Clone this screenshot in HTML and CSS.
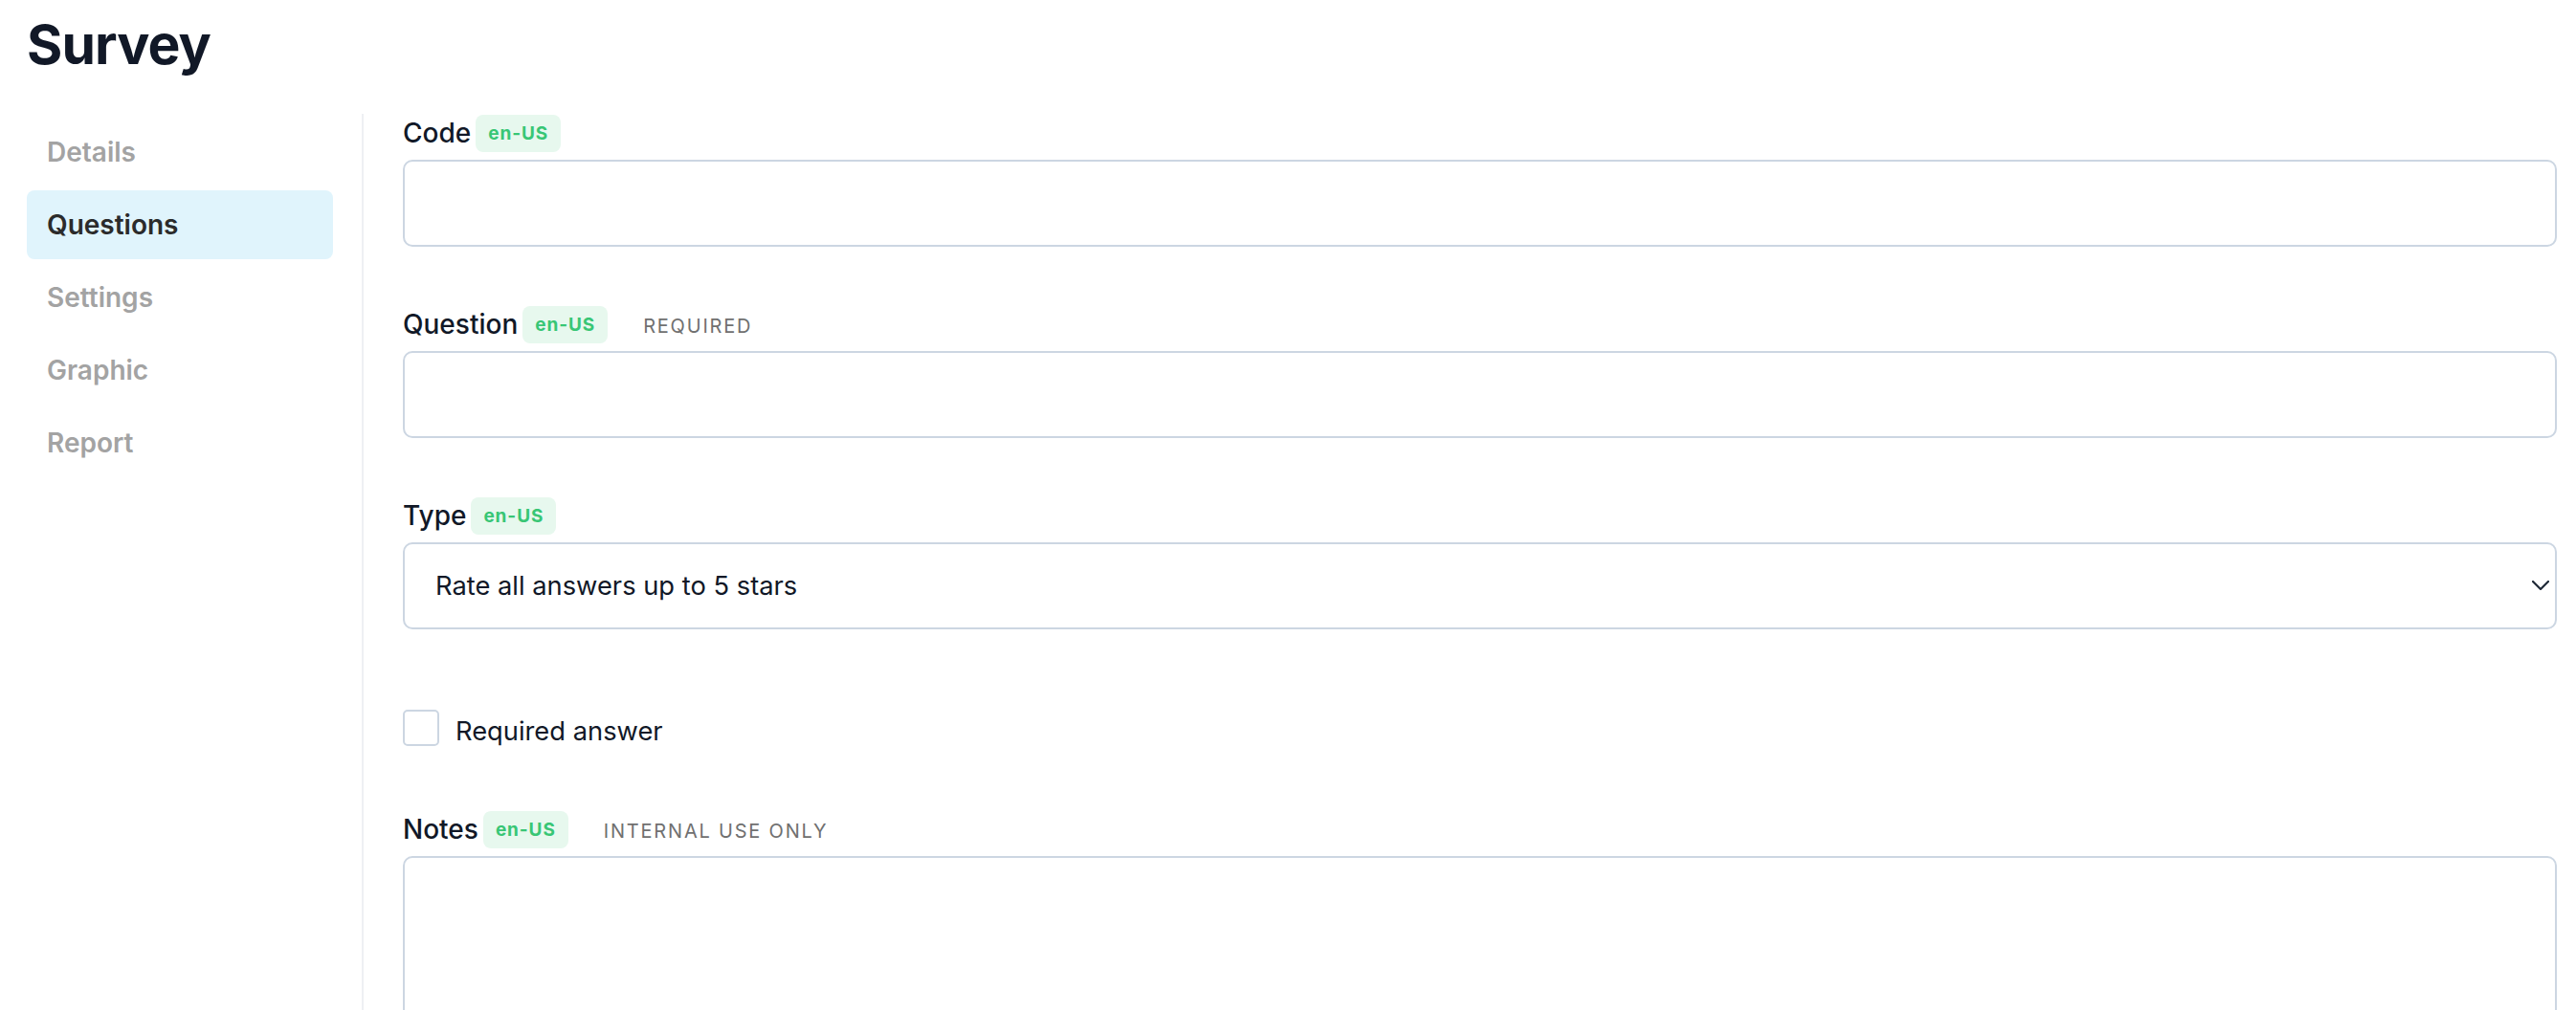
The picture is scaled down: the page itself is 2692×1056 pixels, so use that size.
FILE: index.html
```html
<!DOCTYPE html>
<html lang="en">
<head>
<meta charset="utf-8">
<title>Survey</title>
<link rel="stylesheet" href="styles.css">
</head>
<body>
<div class="page">
  <h1 class="title">Survey</h1>
  <div class="layout">
    <nav class="sidebar">
      <a class="nav-item">Details</a>
      <a class="nav-item active">Questions</a>
      <a class="nav-item">Settings</a>
      <a class="nav-item">Graphic</a>
      <a class="nav-item">Report</a>
    </nav>
    <main class="content">
      <div class="field">
        <div class="label-row">
          <span class="label">Code</span>
          <span class="badge">en-US</span>
        </div>
        <input class="input" type="text">
      </div>
      <div class="field">
        <div class="label-row">
          <span class="label">Question</span>
          <span class="badge">en-US</span>
          <span class="hint">Required</span>
        </div>
        <input class="input" type="text">
      </div>
      <div class="field">
        <div class="label-row">
          <span class="label">Type</span>
          <span class="badge">en-US</span>
        </div>
        <div class="select-wrap">
          <select class="select">
            <option>Rate all answers up to 5 stars</option>
          </select>
          <svg class="chevron" width="18" height="10" viewBox="0 0 18 10"><path d="M1 1l8 8 8-8" fill="none" stroke="#1f2937" stroke-width="2.2" stroke-linecap="round" stroke-linejoin="round"/></svg>
        </div>
      </div>
      <label class="check-row">
        <span class="checkbox"></span>
        <span class="check-label">Required answer</span>
      </label>
      <div class="field">
        <div class="label-row">
          <span class="label">Notes</span>
          <span class="badge">en-US</span>
          <span class="hint">Internal use only</span>
        </div>
        <textarea class="textarea"></textarea>
      </div>
    </main>
  </div>
</div>
</body>
</html>
```

FILE: styles.css
```css
* { box-sizing: border-box; }
html, body { margin: 0; padding: 0; background: #ffffff; }
body {
  font-family: Inter, "Noto Sans", "Liberation Sans", sans-serif;
  color: #111827;
  overflow: hidden;
  height: 1056px;
}
.page {
  padding: 17px 20px 0 28px;
}
.title {
  margin: 0;
  font-size: 57px;
  line-height: 60px;
  font-weight: 700;
  letter-spacing: -0.9px;
  color: #111827;
  height: 102px;
}
.layout {
  display: flex;
  align-items: stretch;
  height: 960px;
}
.sidebar {
  width: 320px;
  flex: 0 0 320px;
  display: flex;
  flex-direction: column;
  gap: 4px;
  padding-top: 4px;
  margin-right: 30px;
}
.nav-item {
  display: flex;
  align-items: center;
  height: 72px;
  padding-left: 21px;
  font-size: 28px;
  font-weight: 600;
  color: #a3a3a3;
  border-radius: 8px;
}
.nav-item.active {
  background: #e0f4fc;
  color: #2b2b2b;
}
.content {
  flex: 1;
  display: flex;
  flex-direction: column;
  border-left: 2px solid #eef0f3;
  padding-left: 41px;
}
.field {
  margin-bottom: 61px;
}
.label-row {
  display: flex;
  align-items: center;
  height: 40px;
  margin-bottom: 8px;
}
.label {
  font-size: 28px;
  font-weight: 500;
  color: #111827;
  margin-right: 5px;
}
.badge {
  display: inline-flex;
  align-items: center;
  height: 39px;
  padding: 0 13px;
  border-radius: 8px;
  background: #e7f8ee;
  color: #38c675;
  font-size: 19px;
  font-weight: 700;
  letter-spacing: 0.9px;
}
.hint {
  margin-left: 37px;
  font-size: 20px;
  letter-spacing: 1.8px;
  text-transform: uppercase;
  color: #707070;
  padding-top: 4px;
}
.input, .select, .textarea {
  display: block;
  width: 100%;
  height: 91px;
  border: 2px solid #ccd6e2;
  border-radius: 10px;
  background: #ffffff;
  font-family: inherit;
  font-size: 27.3px;
  color: #111827;
  outline: none;
}
.select-wrap {
  position: relative;
}
.select {
  appearance: none;
  -webkit-appearance: none;
  padding: 0 60px 0 32px;
}
.chevron {
  position: absolute;
  right: 8px;
  top: 40px;
  width: 18px;
  height: 10px;
}
.check-row {
  display: flex;
  align-items: center;
  gap: 17px;
  margin-top: 23px;
  margin-bottom: 67px;
  height: 38px;
}
.checkbox {
  width: 38px;
  height: 38px;
  border: 2px solid #ccd6e2;
  border-radius: 5px;
  background: #ffffff;
}
.check-label {
  font-size: 27.3px;
  color: #111827;
  padding-top: 6px;
}
.textarea {
  height: 260px;
  resize: none;
}
```
